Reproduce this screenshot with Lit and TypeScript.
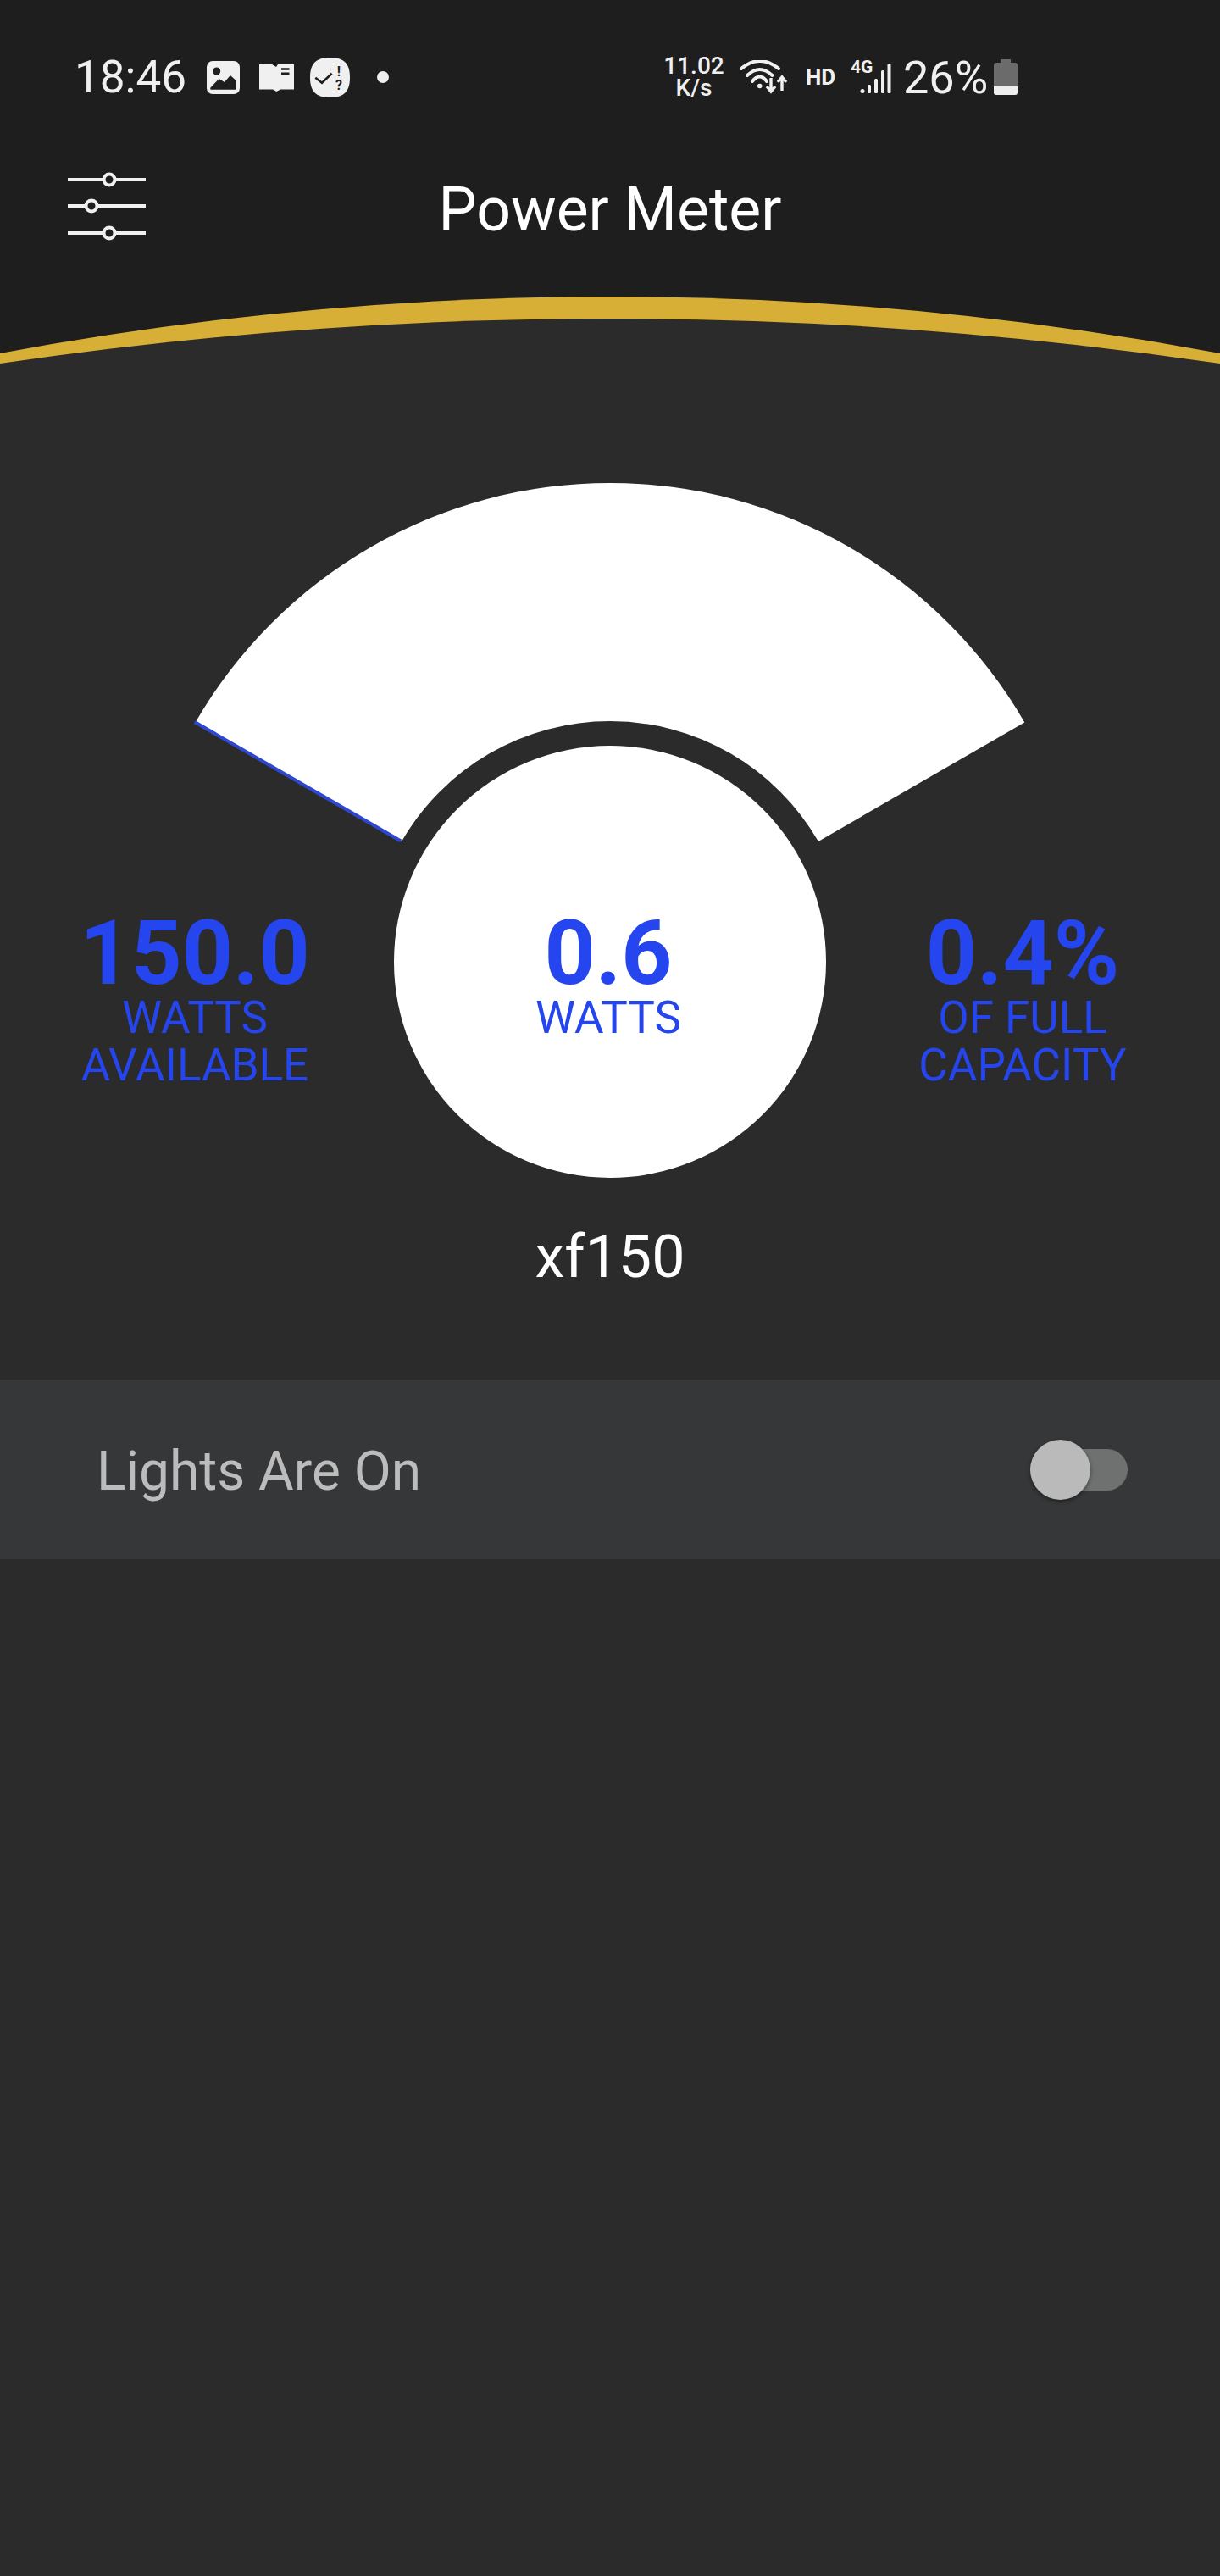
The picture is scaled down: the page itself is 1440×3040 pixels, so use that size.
import { LitElement, html, css, svg } from "lit";
import { customElement } from "lit/decorators.js";

const CX = 720;
const CY = 695;

function polar(r: number, deg: number) {
  const a = (deg * Math.PI) / 180;
  return [CX + r * Math.cos(a), CY - r * Math.sin(a)];
}

function wedge(start: number, end: number, ro: number, ri: number) {
  const [x1, y1] = polar(ro, start);
  const [x2, y2] = polar(ro, end);
  const [x3, y3] = polar(ri, end);
  const [x4, y4] = polar(ri, start);
  return `M${x1} ${y1}A${ro} ${ro} 0 0 1 ${x2} ${y2}L${x3} ${y3}A${ri} ${ri} 0 0 0 ${x4} ${y4}Z`;
}

function edge(deg: number, ro: number, ri: number) {
  const [x1, y1] = polar(ro, deg);
  const [x2, y2] = polar(ri, deg);
  return `M${x1} ${y1}L${x2} ${y2}`;
}

@customElement("app-root")
export class AppRoot extends LitElement {
  static styles = css`
    :host {
      display: block;
      width: 1440px;
      height: 3040px;
      background: #2b2b2b;
      font-family: Roboto, "Liberation Sans", sans-serif;
      color: #fff;
      overflow: hidden;
    }
    .top { background: #1f1e1f; }
    .status {
      height: 182px;
      box-sizing: border-box;
      padding: 0 239px 0 88px;
      display: flex;
      align-items: center;
      justify-content: space-between;
      color: #f0f0f0;
    }
    .left, .right { display: flex; align-items: center; }
    .time { font-size: 53px; line-height: 62px; width: 156px; }
    .speed { display: flex; flex-direction: column; align-items: center; font-size: 28px; line-height: 26px; font-weight: 500; width: 72px; }
    svg { display: block; }
    .i-photo { margin-right: 23px; }
    .i-book { margin-right: 19px; }
    .i-check { margin-right: 32px; }
    .i-wifi { margin: 0 21px 0 18px; }
    .hd { font-size: 26px; font-weight: 700; width: 35px; margin-right: 18px; }
    .i-signal { margin-right: 14px; }
    .pct { font-size: 54px; width: 96px; margin-right: 11px; }
    .bar {
      height: 128px;
      box-sizing: border-box;
      padding-top: 3px;
      position: relative;
      display: flex;
      justify-content: center;
      align-items: center;
    }
    .title { font-size: 71.5px; line-height: 84px; color: #fff; }
    .menu { position: absolute; left: 80px; top: 14px; }
    .gauge { position: relative; height: 1000px; }
    .stats {
      position: absolute;
      left: 0;
      right: 0;
      top: 639px;
      display: grid;
      grid-template-columns: 460px 516px 462px;
      text-align: center;
      color: #2546ef;
    }
    .value { font-size: 105px; font-weight: 700; line-height: 94px; }
    .unit { font-size: 53px; line-height: 56px; }
    .name { text-align: center; font-size: 70px; line-height: 80px; margin-top: 3px; }
    .row {
      margin-top: 105px;
      height: 212px;
      background: #363739;
      display: flex;
      align-items: center;
      justify-content: space-between;
      padding: 0 109px 0 114px;
    }
    .label { font-size: 64px; color: #bcbcbc; margin-top: 5px; }
    .switch { position: relative; width: 115px; height: 49px; background: #6f7070; border-radius: 25px; }
    .thumb { position: absolute; left: 0; top: -11px; width: 71px; height: 71px; border-radius: 50%; background: #bababa; box-shadow: 0 2px 5px rgba(0,0,0,.45); }
  `;

  render() {
    return html`
      <div class="top">
        <div class="status">
          <div class="left">
            <span class="time">18:46</span>
            <svg class="i-photo" width="39" height="39" viewBox="0 0 39 39"><rect width="39" height="39" rx="7" fill="#f0f0f0"/><circle cx="11.700" cy="12" r="4.500" fill="#1f1e1f"/><path d="M5 32l9.500-10 6.500 4 7-8 6 5.500V33H5z" fill="#1f1e1f" stroke="#1f1e1f" stroke-width="1.500" stroke-linejoin="round"/></svg>
            <svg class="i-book" width="41" height="33" viewBox="0 0 41 33"><path d="M0 1h15l5 3 2-3h19v29.500H25L20.500 33 16 30.500H0z" fill="#f0f0f0"/><path d="M26 6.500h9.500M26 11.700h9.500" stroke="#1f1e1f" stroke-width="2.500"/></svg>
            <svg class="i-check" width="47" height="47" viewBox="0 0 47 47"><path d="M23.500 0C40 0 47 7 47 23.500S40 47 23.500 47 0 40 0 23.500 7 0 23.500 0z" fill="#f0f0f0"/><path d="M6.300 23.700l7.700 6 11.700-11" fill="none" stroke="#1f1e1f" stroke-width="2.600"/><text x="34" y="22" text-anchor="middle" font-family="Roboto" font-weight="700" font-size="16" fill="#1f1e1f">!</text><text x="34" y="38" text-anchor="middle" font-family="Roboto" font-weight="700" font-size="16" fill="#1f1e1f">?</text></svg>
            <svg width="14" height="14" viewBox="0 0 14 14"><circle cx="7" cy="7" r="7" fill="#f0f0f0"/></svg>
          </div>
          <div class="right">
            <div class="speed"><span>11.02</span><span>K/s</span></div>
            <svg class="i-wifi" width="57" height="40" viewBox="0 0 57 40"><g fill="none" stroke="#f0f0f0" stroke-width="4" stroke-linecap="round"><path d="M2 10Q23.700 -8 46 10"/><path d="M9 18Q23.700 4 38.500 18"/><path d="M15 25Q23.700 14 32 25"/></g><circle cx="23.700" cy="30.500" r="2.800" fill="#f0f0f0"/><path d="M37 21v16M32 31l5 6 5-6M50 36V21M45 26l5-6 5 6" fill="none" stroke="#f0f0f0" stroke-width="3.400"/></svg>
            <span class="hd">HD</span>
            <svg class="i-signal" width="48" height="40" viewBox="0 0 48 40"><text x="0" y="15" font-family="Roboto" font-weight="700" font-size="21" fill="#f0f0f0">4G</text><g fill="#f0f0f0"><circle cx="14" cy="36.500" r="2.500"/><rect x="20" y="29" width="4" height="10" rx="1.500"/><rect x="28" y="22" width="4" height="17" rx="1.500"/><rect x="36" y="12" width="4" height="27" rx="1.500"/><rect x="43.500" y="4" width="4" height="35" rx="1.500"/></g></svg>
            <span class="pct">26%</span>
            <svg width="28" height="42" viewBox="0 0 28 42"><path d="M8 0h12v4h5a3 3 0 0 1 3 3v32a3 3 0 0 1-3 3H3a3 3 0 0 1-3-3V7a3 3 0 0 1 3-3h5z" fill="#6b6b6b"/><path d="M0 32h28v7a3 3 0 0 1-3 3H3a3 3 0 0 1-3-3z" fill="#eee"/></svg>
          </div>
        </div>
        <div class="bar">
          <svg class="menu" width="92" height="92" viewBox="0 0 92 92"><g stroke="#f0f0f0" stroke-width="4" fill="none"><path d="M0 16h42M56 16h36M0 47h21M35 47h57M0 79h42M56 79h36"/><circle cx="49" cy="16" r="6.500"/><circle cx="28" cy="47" r="6.500"/><circle cx="49" cy="79" r="6.500"/></g></svg>
          <span class="title">Power Meter</span>
        </div>
      </div>
      <svg width="1440" height="130" viewBox="0 0 1440 130">
        <rect width="1440" height="130" fill="#1f1e1f"/>
        <path d="M0 107Q720 -27 1440 107V130H0z" fill="#d7ae36"/>
        <path d="M0 119Q720 13 1440 119V130H0z" fill="#2b2b2b"/>
      </svg>
      <div class="gauge">
        <svg width="1440" height="1000" viewBox="0 0 1440 1000">
          ${svg`<path d=${wedge(150, 30, 565, 284)} fill="#fff"/>`}
          ${svg`<path d=${edge(150, 566, 285)} stroke="#2f47cf" stroke-width="4" fill="none"/>`}
          <circle cx=${CX} cy=${CY} r="255" fill="#fff"/>
        </svg>
        <div class="stats">
          <div><div class="value">150.0</div><div class="unit">WATTS<br/>AVAILABLE</div></div>
          <div><div class="value">0.6</div><div class="unit">WATTS</div></div>
          <div><div class="value">0.4%</div><div class="unit">OF FULL<br/>CAPACITY</div></div>
        </div>
      </div>
      <div class="name">xf150</div>
      <div class="row">
        <span class="label">Lights Are On</span>
        <div class="switch"><div class="thumb"></div></div>
      </div>
    `;
  }
}
